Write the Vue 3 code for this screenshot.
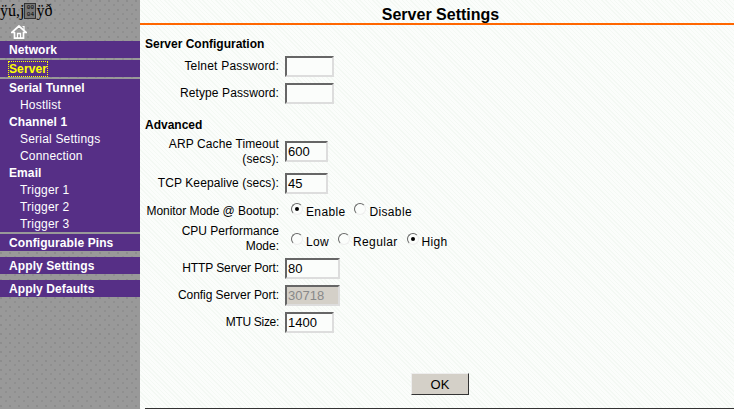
<script setup>
const groups = [
  [{ t: 'Network', b: 1 }],
  [{ t: 'Server', b: 1, active: 1 }],
  [
    { t: 'Serial Tunnel', b: 1 },
    { t: 'Hostlist' },
    { t: 'Channel 1', b: 1 },
    { t: 'Serial Settings' },
    { t: 'Connection' },
    { t: 'Email', b: 1 },
    { t: 'Trigger 1' },
    { t: 'Trigger 2' },
    { t: 'Trigger 3' }
  ]
]
</script>

<template>
  <div class="page">
    <aside class="side">
      <div class="garble">ÿú,j<span class="box"><i>00</i><i>04</i></span>ÿð</div>
      <svg class="home" width="16" height="14" viewBox="0 0 16 14">
        <path d="M11.5 1.5 H13 V5" fill="none" stroke="#fff" stroke-width="1.2" />
        <path d="M8 1 L0.8 7.5 H3.5 V13.2 H12.5 V7.5 H15.2 Z" fill="none" stroke="#fff" stroke-width="1.7" />
        <path d="M6.5 13 V8.5 H9.5 V13" fill="none" stroke="#fff" stroke-width="1.3" />
      </svg>
      <nav class="nav">
        <div v-for="(g, i) in groups" :key="i" class="group">
          <a v-for="it in g" :key="it.t" class="item" :class="{ bold: it.b, sub: !it.b, active: it.active }"><span>{{ it.t }}</span></a>
        </div>
        <div class="group"><a class="item bold"><span>Configurable Pins</span></a></div>
        <div class="group wide"><a class="item bold"><span>Apply Settings</span></a></div>
        <div class="group wide"><a class="item bold"><span>Apply Defaults</span></a></div>
      </nav>
    </aside>
    <main class="main">
      <h1 class="title">Server Settings</h1>
      <form class="form" @submit.prevent>
        <h2 class="head first">Server Configuration</h2>
        <div class="row"><label class="l2">Telnet Password:</label><input class="w49" type="password" /></div>
        <div class="row"><label class="l1">Retype Password:</label><input class="w49" type="password" /></div>
        <h2 class="head adv">Advanced</h2>
        <div class="row arp"><label class="l1">ARP Cache Timeout (secs):</label><input class="w43" value="600" /></div>
        <div class="row tcp"><label class="l1">TCP Keepalive (secs):</label><input class="w43" value="45" /></div>
        <div class="row mon">
          <label class="t0">Monitor Mode @ Bootup:</label>
          <div class="radios">
            <span class="radio on"></span><span class="rl r1">Enable</span>
            <span class="radio"></span><span class="rl">Disable</span>
          </div>
        </div>
        <div class="row cpu">
          <label>CPU Performance Mode:</label>
          <div class="radios low">
            <span class="radio"></span><span class="rl r2">Low</span>
            <span class="radio"></span><span class="rl r2">Regular</span>
            <span class="radio on"></span><span class="rl">High</span>
          </div>
        </div>
        <div class="row http"><label class="t1">HTTP Server Port:</label><input class="w55" value="80" /></div>
        <div class="row"><label class="t0">Config Server Port:</label><input class="w55" value="30718" disabled /></div>
        <div class="row"><label class="t3">MTU Size:</label><input class="w49" value="1400" /></div>
        <div class="actions"><button type="button" class="ok">OK</button></div>
      </form>
    </main>
  </div>
</template>

<style>
html, body { margin: 0; background: #fbfdfb; }
</style>

<style scoped>
.page {
  display: flex;
  width: 734px;
  height: 409px;
  overflow: hidden;
  font-family: "Liberation Sans", Arial, sans-serif;
  font-size: 12px;
  color: #000;
}
.side {
  width: 140px;
  flex: none;
  background-color: #999;
  background-image:
    radial-gradient(circle at 1px 1px, #8c8c8c 0.7px, transparent 1px),
    radial-gradient(circle at 6px 5px, #8f8f8f 0.7px, transparent 1px);
  background-size: 9px 9px;
}
.garble {
  height: 24px;
  padding-top: 2px;
  box-sizing: border-box;
  font-family: "Liberation Serif", serif;
  font-size: 16px;
  line-height: 18px;
  white-space: nowrap;
  color: #000;
  display: flex;
  align-items: flex-start;
}
.box {
  display: inline-flex;
  flex-direction: column;
  width: 10px;
  height: 14px;
  margin: 1px 0 0 0;
  border: 1px solid #333;
  background: #777;
  font: 6px/7px "Liberation Mono", monospace;
  text-align: center;
  color: #000;
}
.box i { font-style: normal; display: block; }
.home { display: block; margin: 1px 0 2px 11px; }
.nav { display: flex; flex-direction: column; gap: 2px; }
.group { background: #562f86; }
.group.wide { margin-top: 4px; }
.item {
  display: block;
  height: 17px;
  line-height: 19px;
  color: #fff;
  white-space: nowrap;
}
.item.bold { font-weight: 700; padding-left: 9px; letter-spacing: 0.1px; }
.item.sub { padding-left: 20px; letter-spacing: 0.2px; }
.item.active { color: #ff0; }
.item.active span { outline: 1px dotted #ff0; }
.main {
  flex: 1;
  min-width: 0;
  background-color: #fbfdfb;
  background-image: repeating-linear-gradient(45deg, rgba(230,240,230,.35) 0 1px, transparent 1px 3px);
}
.title {
  margin: 0;
  height: 25px;
  box-sizing: border-box;
  border-bottom: 2px solid #ff6600;
  padding-left: 7px;
  font-size: 16px;
  line-height: 29px;
  font-weight: 700;
  text-align: center;
}
.form {
  height: 384px;
  box-sizing: border-box;
  margin-left: 5px;
  border-bottom: 1px solid #333;
  display: flex;
  flex-direction: column;
}
.head { margin: 0; font-size: 12px; line-height: 15px; font-weight: 700; }
.head.first { margin-top: 12px; margin-bottom: 4px; }
.head.adv { margin-top: 8px; margin-bottom: 2px; }
.row {
  display: grid;
  grid-template-columns: 134px auto;
  column-gap: 6px;
  justify-content: start;
  align-items: center;
  margin-bottom: 6px;
}
.row label { text-align: right; line-height: 15px; color: #000; }
.row.arp label { padding-top: 2px; }
.l2 { letter-spacing: 0.2px; }
.l1 { letter-spacing: 0.1px; }
.t0 { letter-spacing: -0.05px; }
.t1 { letter-spacing: -0.1px; }
.t3 { letter-spacing: -0.3px; }
.row input {
  box-sizing: border-box;
  height: 21px;
  padding: 0 1px;
  border: 2px solid;
  border-color: #666 #ddd #ddd #666;
  background: #fbfdfb;
  font: 13px "Liberation Sans", Arial, sans-serif;
  color: #000;
  outline: none;
}
.row input:disabled { background: #d4d0c8; color: #888; }
.w43 { width: 43px; }
.w49 { width: 49px; }
.w55 { width: 55px; }
.row.arp { margin-bottom: 6px; }
.row.tcp { margin-bottom: 10px; }
.row.mon { height: 15px; margin-bottom: 5px; }
.row.cpu { margin-bottom: 4px; }
.radios { display: flex; align-items: center; padding-left: 6px; letter-spacing: 0.35px; }
.radios.low { padding-top: 5px; }
.radio {
  width: 12px;
  height: 12px;
  box-sizing: border-box;
  border-radius: 50%;
  border: 1px solid;
  border-color: #666 #eee #eee #666;
  background: #fbfdfb;
  margin-right: 3px;
  position: relative;
  top: -3px;
}
.radio.on::after {
  content: "";
  position: absolute;
  left: 3px;
  top: 3px;
  width: 4px;
  height: 4px;
  border-radius: 50%;
  background: #000;
}
.rl { margin-right: 9px; }
.r2 { margin-right: 9px; }
.actions { margin-top: 34px; padding-left: 266px; }
.ok {
  width: 58px;
  height: 22px;
  box-sizing: border-box;
  border: 1px solid;
  border-color: #eee #333 #333 #eee;
  background: #d4d0c8;
  font: 13px "Liberation Sans", Arial, sans-serif;
  color: #000;
  padding: 0;
}
</style>
